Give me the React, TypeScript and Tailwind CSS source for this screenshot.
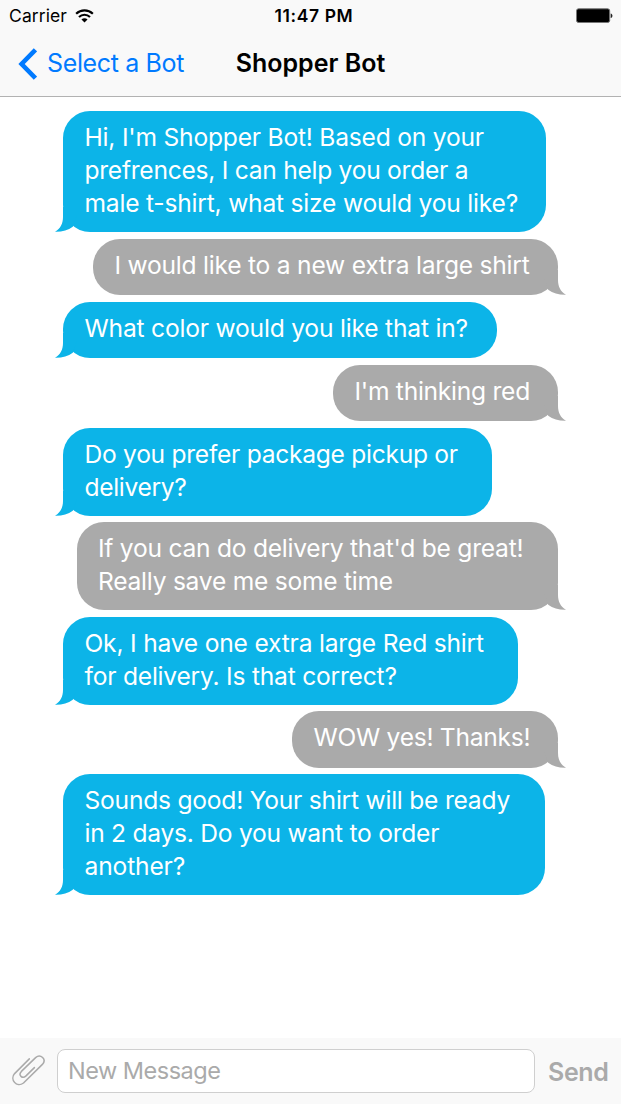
import clsx from "clsx";

interface Line {
  text: string;
  tracking: string;
}

interface Message {
  from: "bot" | "me";
  size: string;
  lines: Line[];
}

const messages: Message[] = [
  {
    from: "bot",
    size: "w-[483px] h-[121px]",
    lines: [
      { text: "Hi, I'm Shopper Bot! Based on your", tracking: "tracking-[-0.21px]" },
      { text: "prefrences, I can help you order a", tracking: "tracking-[-0.27px]" },
      { text: "male t-shirt, what size would you like?", tracking: "tracking-[-0.21px]" },
    ],
  },
  {
    from: "me",
    size: "w-[465px] h-[56.5px]",
    lines: [{ text: "I would like to a new extra large shirt", tracking: "tracking-[-0.23px]" }],
  },
  {
    from: "bot",
    size: "w-[433.5px] h-[56.5px]",
    lines: [{ text: "What color would you like that in?", tracking: "tracking-[-0.2px]" }],
  },
  {
    from: "me",
    size: "w-[225px] h-[56.5px]",
    lines: [{ text: "I'm thinking red", tracking: "tracking-[-0.27px]" }],
  },
  {
    from: "bot",
    size: "w-[429px] h-[88px]",
    lines: [
      { text: "Do you prefer package pickup or", tracking: "tracking-[-0.28px]" },
      { text: "delivery?", tracking: "tracking-[-0.35px]" },
    ],
  },
  {
    from: "me",
    size: "w-[481.5px] h-[88px]",
    lines: [
      { text: "If you can do delivery that'd be great!", tracking: "tracking-[-0.25px]" },
      { text: "Really save me some time", tracking: "tracking-[-0.25px]" },
    ],
  },
  {
    from: "bot",
    size: "w-[454.5px] h-[88px]",
    lines: [
      { text: "Ok, I have one extra large Red shirt", tracking: "tracking-[-0.2px]" },
      { text: "for delivery. Is that correct?", tracking: "tracking-[-0.22px]" },
    ],
  },
  {
    from: "me",
    size: "w-[266px] h-[56.5px]",
    lines: [{ text: "WOW yes! Thanks!", tracking: "tracking-[-0.28px]" }],
  },
  {
    from: "bot",
    size: "w-[481.5px] h-[121px]",
    lines: [
      { text: "Sounds good! Your shirt will be ready", tracking: "tracking-[-0.23px]" },
      { text: "in 2 days. Do you want to order", tracking: "tracking-[-0.26px]" },
      { text: "another?", tracking: "tracking-[-0.15px]" },
    ],
  },
];

function WifiIcon() {
  return (
    <svg width="19" height="14" viewBox="0 0 20 14" fill="none" stroke="#000" strokeWidth="2.3">
      <path d="M1.2 4.6C6.2-.2 13.8-.2 18.8 4.6" />
      <path d="M4.2 8C7.5 4.9 12.5 4.9 15.8 8" />
      <path d="M10 13.8 6.8 10.6C8.6 9 11.4 9 13.2 10.6Z" fill="#000" stroke="none" />
    </svg>
  );
}

function BatteryIcon() {
  return (
    <svg width="37" height="16" viewBox="0 0 37 16">
      <rect x=".5" y=".8" width="33.2" height="13.7" rx="2" fill="#000" stroke="#777" />
      <path d="M34.7 5.4C37 6 37 9.4 34.7 10Z" fill="#222" />
    </svg>
  );
}

function PaperclipIcon() {
  return (
    <svg width="36" height="34" viewBox="0 0 36 34" fill="none" stroke="#aaa" strokeWidth="1.5" strokeLinecap="round" strokeLinejoin="round">
      <path d="M18.3 4.9 3.6 19.6C-1.4 25.2 5.4 34.3 12.5 29L31.4 10.4C36 5.6 29.6-.8 24.6 3.6L10.4 17.4C6.8 21.3 11.4 25.3 15 21.9L23.4 13.6" />
    </svg>
  );
}

function Tail({ from }: { from: Message["from"] }) {
  return (
    <svg
      width="22"
      height="25"
      viewBox="0 0 22 25"
      className={clsx(
        "absolute bottom-0",
        from === "bot" ? "-left-2 fill-[#0cb4e8]" : "-right-2 -scale-x-100 fill-[#aaaaaa]",
      )}
    >
      <path d="M8 0V10C8 16.5 5.5 21.5 0 24.8C7 25 13 23.2 17.8 19.7L22 8V0Z" />
    </svg>
  );
}

function Bubble({ message }: { message: Message }) {
  const bot = message.from === "bot";
  return (
    <div className={clsx("flex shrink-0", bot ? "justify-start pl-[63px]" : "justify-end pr-[63px]")}>
      <div className={clsx("relative", message.size)}>
        <div className={clsx("h-full rounded-[27px] pt-[10px] pl-[21.5px]", bot ? "bg-[#0cb4e8]" : "bg-[#aaaaaa]")}>
          {message.lines.map((line) => (
            <p key={line.text} className={clsx("relative z-10 h-[33px] text-[24.6px] leading-[33px] whitespace-nowrap text-white", line.tracking)}>
              {line.text}
            </p>
          ))}
        </div>
        <Tail from={message.from} />
      </div>
    </div>
  );
}

export default function App() {
  return (
    <div className="flex h-[1104px] w-[621px] flex-col overflow-hidden bg-white font-['Inter',sans-serif]">
      <header className="flex h-[97px] shrink-0 flex-col border-b border-[#b2b2b2] bg-[#f9f9f9]">
        <div className="grid h-[31px] grid-cols-[1fr_auto_1fr] items-center pr-2 pl-[9px] text-black">
          <div className="flex items-center gap-2">
            <span className="text-[17.5px] leading-[31px] tracking-[0.1px]">Carrier</span>
            <WifiIcon />
          </div>
          <span className="pl-[6px] text-[17.5px] leading-[31px] font-semibold tracking-[0.6px]">11:47 PM</span>
          <div className="flex justify-end">
            <BatteryIcon />
          </div>
        </div>
        <div className="grid h-[65px] grid-cols-[1fr_auto_1fr] items-center">
          <button className="flex items-center gap-[10px] pl-[18px] text-[#007aff]">
            <svg width="19" height="32" viewBox="0 0 19 32" fill="none" stroke="currentColor" strokeWidth="4.6">
              <path d="M17.4 1.8 3.6 16 17.4 30.2" />
            </svg>
            <span className="text-[25px] tracking-[-0.36px] whitespace-nowrap">Select a Bot</span>
          </button>
          <h1 className="text-[25px] font-semibold whitespace-nowrap text-black">Shopper Bot</h1>
          <span />
        </div>
      </header>

      <main className="flex flex-1 flex-col gap-[6.5px] pt-[14px]">
        {messages.map((message, i) => (
          <Bubble key={i} message={message} />
        ))}
      </main>

      <footer className="flex h-[66px] shrink-0 items-center bg-[#f9f9f9] pl-[11px]">
        <PaperclipIcon />
        <input
          placeholder="New Message"
          className="ml-[10px] h-[44px] w-[478px] rounded-[8px] border border-[#cfcfcf] bg-white px-[10px] pb-[2px] text-[23.5px] tracking-[-0.5px] placeholder:text-[#aaaaaa]"
        />
        <button className="ml-[13px] pt-[3px] text-[25px] font-semibold tracking-[-0.35px] text-[#aaaaaa]">Send</button>
      </footer>
    </div>
  );
}
